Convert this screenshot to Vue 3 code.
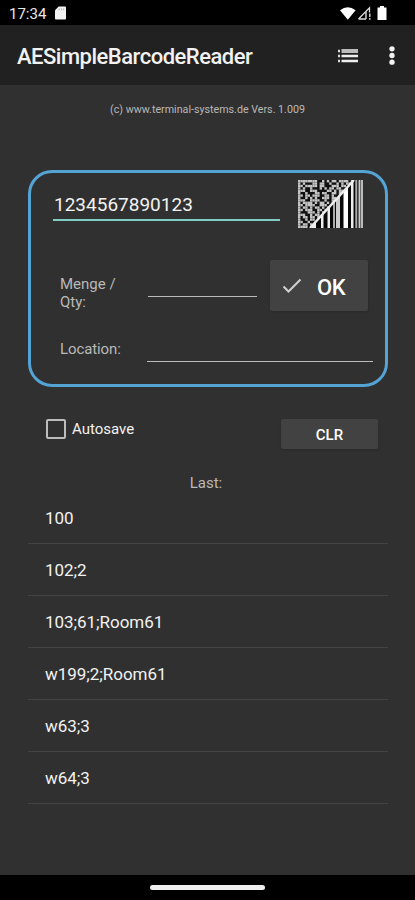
<script setup>
const entries = ['100', '102;2', '103;61;Room61', 'w199;2;Room61', 'w63;3', 'w64;3']

// Upper-left half of the scanner emblem: 1 marks a light module.
const modules = [
  '111111110010101101111011',
  '10100011011001001010110',
  '1101111101100011101101',
  '101001000101011011001',
  '11100111000011010110',
  '1001000110110011011',
  '110110111001101001',
  '10010101001110110',
  '1110011110010011',
  '101111010110101',
  '11011110011100',
  '1011010110101',
  '110111001101',
  '10001110101',
  '1110010110',
  '101101101',
  '10010110',
  '1100100',
  '101101',
  '11110'
]
const cells = modules.flatMap((row, y) =>
  [...row].flatMap((c, x) => (c === '1' ? [{ x: x * 2.4, y: y * 2.4 }] : []))
)
const bars = [
  [14, 4, '#eee'], [23, 2.5, '#eee'], [29.5, 2.5, '#eee'], [35, 2, '#aaa'], [38, 4, '#ccc'],
  [45.5, 4.5, '#fff'], [53, 2.5, '#eee'], [57.3, 2, '#aaa'], [60.5, 2, '#ccc'], [63, 2, '#bbb']
]
</script>

<template>
  <div class="screen">
    <div class="status">
      <span class="time">17:34</span>
      <svg class="sd" viewBox="0 0 12 14"><path d="M4 0h7q1 0 1 1v12q0 1-1 1H1q-1 0-1-1V4z" fill="#f4f4f4" /><path d="M4.5 2v2M7 2v2M9.5 2v2" stroke="#aaa" stroke-width="1" /></svg>
      <svg class="signals" viewBox="0 0 50 16">
        <path d="M0 4.2Q7.8 -1.8 15.6 4.2L7.8 13.7z" fill="#fff" />
        <path d="M18.5 13L29.5 1.8V6.5M18.5 13H26" fill="none" stroke="#ddd" stroke-width="1.3" />
        <path d="M26 6V13M29.8 7.5v3.5M29.8 12v1.8" stroke="#ddd" stroke-width="1.4" />
        <path d="M40 0h4v1.5h2.5V14h-9V1.5H40z" fill="#fff" />
      </svg>
    </div>

    <header class="bar">
      <h1>AESimpleBarcodeReader</h1>
      <svg class="list-icon" viewBox="0 0 20 14">
        <path d="M0 2h2M0 7h2M0 12h2" stroke="#ddd" stroke-width="2.6" />
        <path d="M3.5 2h16.5" stroke="#bbb" stroke-width="4" />
        <path d="M3.5 7h16.5M3.5 12h16.5" stroke="#eee" stroke-width="2.6" />
      </svg>
      <svg class="more-icon" viewBox="0 0 6 20"><g fill="#f2f2f2"><circle cx="3" cy="3" r="2.8" /><circle cx="3" cy="10" r="2.8" /><circle cx="3" cy="17" r="2.8" /></g></svg>
    </header>

    <main>
      <p class="copyright">(c) www.terminal-systems.de Vers. 1.009</p>

      <section class="card">
        <div class="scan-row">
          <div class="field code">1234567890123</div>
          <svg class="emblem" viewBox="0 0 65 48">
            <rect width="65" height="48" fill="#101010" />
            <rect v-for="(c, i) in cells" :key="i" :x="c.x" :y="c.y" width="2.4" height="2.4" fill="#c4c4c4" />
            <path d="M12 48L56 0H65V48z" fill="#090909" />
            <clipPath id="half"><path d="M12 48L56 0H65V48z" /></clipPath>
            <g clip-path="url(#half)"><rect v-for="b in bars" :key="b[0]" :x="b[0]" y="0" :width="b[1]" height="48" :fill="b[2]" /></g>
            <path d="M12 48L56 0" stroke="#eee" stroke-width="2.4" />
          </svg>
        </div>
        <div class="qty-row">
          <label>Menge /<br />Qty:</label>
          <div class="field qty"></div>
          <button class="ok">
            <svg viewBox="0 0 20 16"><path d="M1.5 8.5L6.5 13.5L18.5 1.5" fill="none" stroke="#d0d0d0" stroke-width="2" /></svg>
            <span>OK</span>
          </button>
        </div>
        <div class="location-row">
          <label>Location:</label>
          <div class="field location"></div>
        </div>
      </section>

      <div class="actions">
        <div class="check"><span class="box"></span><span class="autosave">Autosave</span></div>
        <button class="clear">CLR</button>
      </div>

      <h2>Last:</h2>
      <ul>
        <li v-for="entry in entries" :key="entry">{{ entry }}</li>
      </ul>
    </main>

    <footer><span class="pill"></span></footer>
  </div>
</template>

<style>
body { margin: 0; background: #000; }
</style>

<style scoped>
* { box-sizing: border-box; }
.screen { width: 415px; height: 900px; display: flex; flex-direction: column; background: #303030; color: #f2f2f2; font-family: Roboto, sans-serif; overflow: hidden; }
.status { height: 25px; flex: none; background: #000; display: flex; align-items: flex-start; padding: 6px 0 0 9px; }
.time { width: 45px; font-size: 15px; line-height: 16px; color: #e8e8e8; }
.sd { width: 11px; height: 14px; margin-left: 1px; }
.signals { width: 50px; height: 16px; margin-left: 274px; }
.bar { height: 60px; flex: none; background: #212121; display: flex; align-items: center; padding: 0 20px 0 17px; }
h1 { margin: 3px 0 0; width: 321px; font-size: 22px; line-height: 26px; font-weight: 500; letter-spacing: -0.5px; white-space: nowrap; flex: none; }
.list-icon { width: 20px; height: 14px; flex: none; margin-top: 1px; }
.more-icon { width: 6px; height: 19px; margin: 1px 0 0 31px; flex: none; }
main { flex: 1; }
.copyright { margin: 18px 0 0; text-align: center; font-size: 10.7px; line-height: 14px; color: #b8b8b8; }
.card { width: 360px; height: 217px; margin: 53px 0 0 28px; border: 3px solid #54a3d5; border-radius: 24px; padding: 7px 12px 0 22px; }
.scan-row { display: flex; height: 49px; }
.field { border-bottom: 1px solid #bbb; }
.code { width: 227px; height: 41px; border-bottom: 2px solid #80cbc4; padding: 14px 0 0 1px; font-size: 19px; line-height: 22px; }
.emblem { width: 65px; height: 48px; margin-left: 18px; }
.qty-row { display: flex; margin-top: 31px; height: 52px; padding-left: 7px; }
label { font-size: 15px; line-height: 18px; color: #b9b9b9; }
.qty-row label { width: 88px; padding-top: 15px; }
.qty { width: 109px; height: 37px; }
button { border: 0; padding: 0; background: #424242; color: #fff; font-family: inherit; font-weight: 500; border-radius: 2px; box-shadow: 0 1px 2px #2226; }
.ok { width: 98px; height: 51px; margin-left: 13px; display: flex; align-items: center; padding-left: 12px; font-size: 22px; letter-spacing: -0.3px; }
.ok svg { width: 20px; height: 16px; }
.ok span { margin-left: 15px; padding-top: 3px; }
.location-row { display: flex; height: 50px; padding-left: 7px; }
.location-row label { width: 87px; padding-top: 28px; letter-spacing: -0.1px; }
.location { width: 226px; height: 50px; }
.actions { display: flex; justify-content: space-between; margin: 32px 37px 0 46px; height: 30px; }
.check { display: flex; align-items: flex-start; }
.box { width: 20px; height: 20px; border: 2px solid #bdbdbd; border-radius: 2px; }
.autosave { font-size: 15px; line-height: 21px; margin-left: 6px; }
.clear { width: 97px; height: 30px; font-size: 15px; padding-top: 2px; }
h2 { margin: 24px 0 0; text-align: center; padding-right: 3px; font-size: 15px; line-height: 20px; font-weight: 400; color: #b9b9b9; }
ul { list-style: none; margin: -1px 27px 0 28px; padding: 0; }
li { height: 52px; border-bottom: 1px solid #444; padding: 15px 0 0 17px; font-size: 17px; line-height: 22px; letter-spacing: -0.05px; }
footer { height: 25px; flex: none; background: #000; display: flex; justify-content: center; padding-top: 10px; }
.pill { width: 115px; height: 5px; border-radius: 3px; background: #eee; }
</style>
